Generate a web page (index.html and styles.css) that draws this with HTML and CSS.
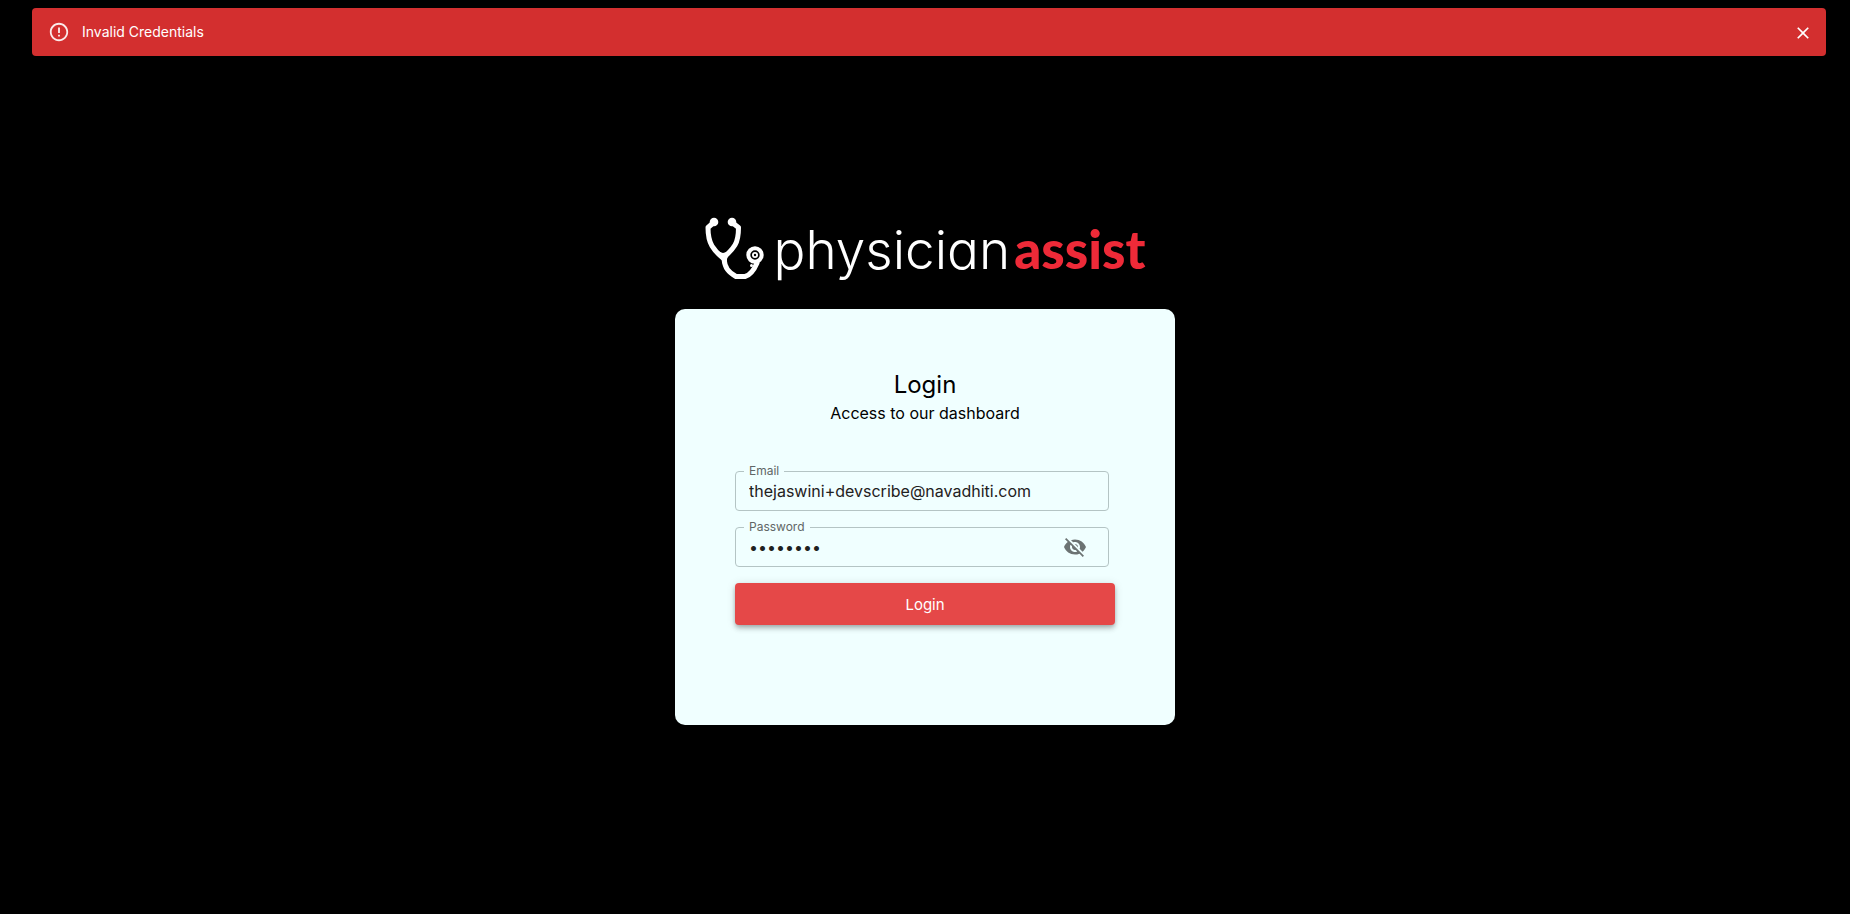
FILE: index.html
```html
<!DOCTYPE html>
<html lang="en">
<head>
<meta charset="utf-8">
<title>Physician Assist – Login</title>
<link rel="stylesheet" href="styles.css">
</head>
<body>
<div class="alert" role="alert">
  <svg class="alert-icon" viewBox="0 0 24 24" aria-hidden="true"><path d="M11 15h2v2h-2zm0-8h2v6h-2zm.99-5C6.47 2 2 6.48 2 12s4.47 10 9.99 10C17.52 22 22 17.52 22 12S17.52 2 11.99 2zM12 20c-4.42 0-8-3.58-8-8s3.58-8 8-8 8 3.58 8 8-3.58 8-8 8z"/></svg>
  <span class="alert-text">Invalid Credentials</span>
  <button class="alert-close" type="button" aria-label="Close">
    <svg viewBox="0 0 24 24" aria-hidden="true"><path d="M19 6.41L17.59 5 12 10.59 6.41 5 5 6.41 10.59 12 5 17.59 6.41 19 12 13.41 17.59 19 19 17.59 13.41 12z"/></svg>
  </button>
</div>
<main class="page">
  <div class="logo">
    <svg class="logo-icon" viewBox="0 0 60 63" aria-hidden="true">
      <g fill="none" stroke="#fff" stroke-linecap="round" stroke-linejoin="round">
        <path stroke-width="5" d="M7 7 L3 10.500 C3 18 4 24 7 29 C10 34 13 37 18 41 C24 36 27 33 30 28 C33 23 33.500 18 33.500 10.500 L29 7"/>
        <path stroke-width="5" d="M19 42 C20 51 23 55 31 59.500 H40 C46 58 49 53 52 46"/>
        <circle cx="50" cy="38" r="6.700" stroke-width="4"/>
      </g>
      <g fill="#fff">
        <circle cx="9" cy="5" r="4.300"/><circle cx="27" cy="5" r="4.300"/>
        <path d="M12 34l6 2 7-2-3 8 0 6h-4l-1-6z"/>
        <circle cx="50" cy="38" r="3"/><circle cx="46.500" cy="48.500" r="1.500"/>
      </g>
      <circle cx="50" cy="38" r="1.200" fill="#000"/>
    </svg>
    <span class="logo-first">physician</span><span class="logo-second">assist</span>
  </div>
  <section class="card">
    <h1 class="title">Login</h1>
    <p class="subtitle">Access to our dashboard</p>
    <form class="form">
      <div class="field">
        <label class="label" for="email">Email</label>
        <input class="input" id="email" type="email" value="thejaswini+devscribe@navadhiti.com">
      </div>
      <div class="field">
        <label class="label" for="password">Password</label>
        <input class="input" id="password" type="password" value="password">
        <button class="toggle" type="button" aria-label="Show password">
          <svg viewBox="0 0 24 24" aria-hidden="true"><path d="M12 7c2.76 0 5 2.24 5 5 0 .65-.13 1.26-.36 1.83l2.92 2.92c1.51-1.26 2.7-2.89 3.43-4.75-1.73-4.39-6-7.5-11-7.5-1.4 0-2.74.25-3.98.7l2.16 2.16C10.74 7.13 11.35 7 12 7zM2 4.27l2.28 2.28.46.46C3.08 8.3 1.78 10.02 1 12c1.73 4.39 6 7.5 11 7.5 1.55 0 3.03-.3 4.38-.84l.42.42L19.73 22 21 20.73 3.27 3 2 4.27zM7.53 9.8l1.55 1.55c-.05.21-.08.43-.08.65 0 1.66 1.34 3 3 3 .22 0 .44-.03.65-.08l1.55 1.55c-.67.33-1.41.53-2.2.53-2.76 0-5-2.24-5-5 0-.79.2-1.53.53-2.2zm4.31-.78l3.15 3.15.02-.16c0-1.66-1.34-3-3-3l-.17.01z"/></svg>
        </button>
      </div>
      <button class="submit" type="submit">Login</button>
    </form>
  </section>
</main>
</body>
</html>
```
FILE: styles.css
```css
* { box-sizing: border-box; }

body {
  margin: 0;
  padding: 8px 24px 8px 32px;
  background: #000;
  font-family: Inter, "Liberation Sans", sans-serif;
}

button {
  border: 0;
  padding: 0;
  background: none;
  color: inherit;
  font-family: inherit;
  cursor: pointer;
}

svg { display: block; fill: currentColor; }

.alert {
  display: flex;
  align-items: center;
  height: 48px;
  padding: 0 13px 0 16px;
  border-radius: 4px;
  background: #d32f2f;
  color: #fff;
}

.alert-icon { width: 22px; height: 22px; margin-right: 12px; opacity: 0.9; }

.alert-text { flex: 1; font-size: 14px; line-height: 20px; }

.alert-close { padding: 2px 0 0; }
.alert-close svg { width: 20px; height: 20px; }

.page {
  display: flex;
  flex-direction: column;
  align-items: center;
  gap: 29px;
  margin-left: -8px;
  padding-top: 161px;
}

.logo {
  display: flex;
  align-items: baseline;
  height: 63px;
  line-height: 63px;
}

.logo-icon { align-self: flex-start; width: 60px; height: 63px; margin-right: 9px; }

.logo-first {
  color: #fff;
  font-size: 53px;
  font-weight: 300;
  font-feature-settings: "cv11";
}

.logo-second {
  margin-left: 4px;
  color: #ee2a38;
  font-family: Lato, Inter, sans-serif;
  font-size: 53px;
  font-weight: 900;
}

.card {
  width: 100%;
  max-width: 500px;
  padding: 60px 60px 100px;
  border-radius: 10px;
  background: #f0ffff;
  color: #000;
}

.title,
.subtitle { margin: 0; font-weight: 400; text-align: center; }

.title { font-size: 24px; line-height: 32px; }
.subtitle { font-size: 16px; line-height: 24px; }

.form {
  display: flex;
  flex-direction: column;
  gap: 16px;
  margin-top: 46px;
}

.field {
  position: relative;
  display: flex;
  align-items: center;
  height: 40px;
  margin-right: 6px;
  padding: 0 21px 0 13px;
  border: 1px solid #b4c4c4;
  border-radius: 4px;
}

.label {
  position: absolute;
  top: -9px;
  left: 8px;
  padding: 0 5px;
  background: #f0ffff;
  color: #606666;
  font-size: 12px;
  line-height: 16px;
}

.input {
  flex: 1;
  min-width: 0;
  padding: 0;
  border: 0;
  outline: 0;
  background: none;
  color: #1f2121;
  font-family: inherit;
  font-size: 16px;
  line-height: 24px;
}

.toggle { color: #6c7373; }
.toggle svg { width: 24px; height: 24px; }

.submit {
  height: 42px;
  border-radius: 4px;
  background: #e54848;
  box-shadow: 0 2px 4px -1px rgba(0, 0, 0, 0.2), 0 4px 5px 0 rgba(0, 0, 0, 0.14), 0 1px 10px 0 rgba(0, 0, 0, 0.12);
  color: #fff;
  font-size: 15px;
}
```
